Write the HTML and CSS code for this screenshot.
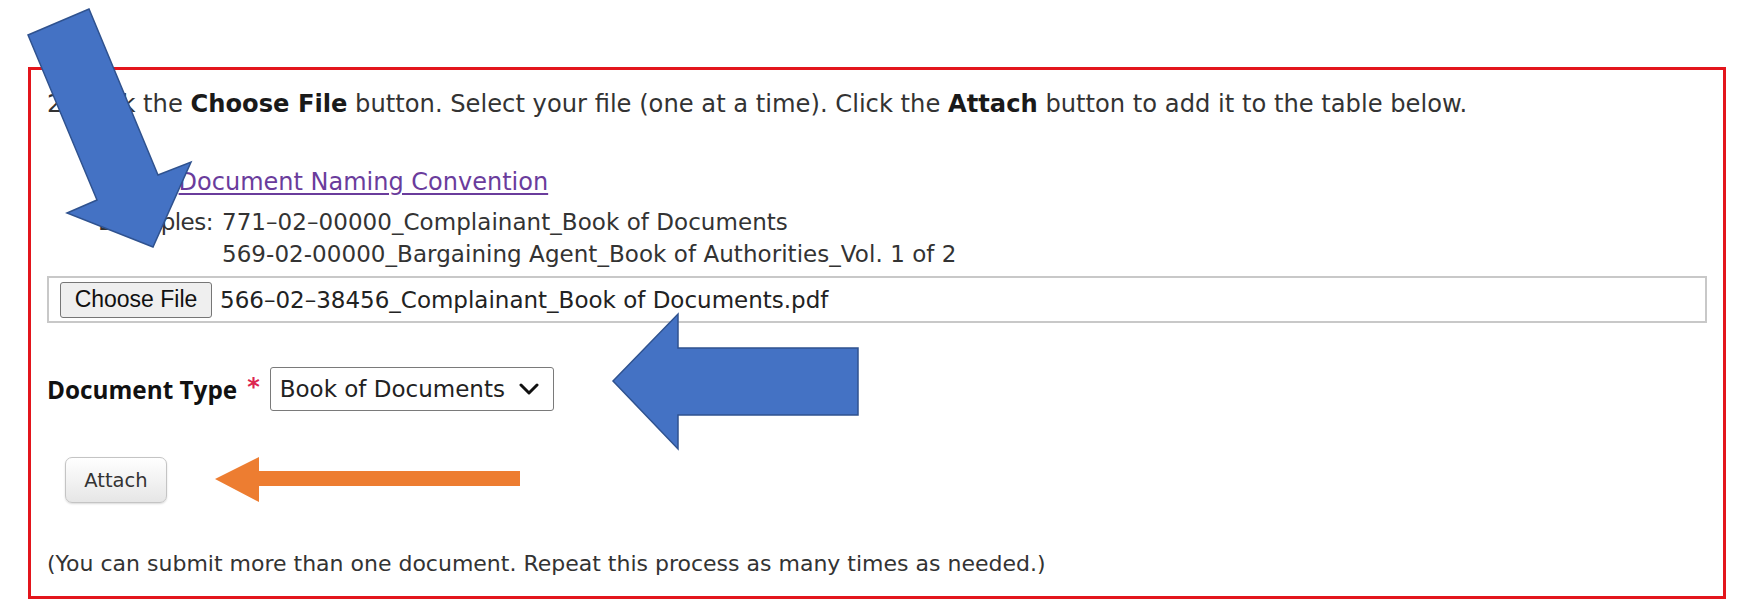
FILE: index.html
```html
<!DOCTYPE html>
<html lang="en">
<head>
<meta charset="utf-8">
<title>Attach documents</title>
<link rel="stylesheet" href="styles.css">
</head>
<body>
<div class="page">
  <section class="panel">
    <p class="step">2. Click the <b>Choose File</b> button. Select your file (one at a time). Click the <b>Attach</b> button to add it to the table below.</p>
    <p class="link-line">View <a href="#" class="doc-link">Document Naming Convention</a></p>
    <div class="examples">
      <span class="ex-label">Examples:</span>
      <span class="ex-value">771–02–00000_Complainant_Book of Documents</span>
      <span class="ex-value">569-02-00000_Bargaining Agent_Book of Authorities_Vol. 1 of 2</span>
    </div>
    <div class="filebox">
      <span class="file-btn">Choose File</span>
      <span class="file-name">566–02–38456_Complainant_Book of Documents.pdf</span>
    </div>
    <div class="doctype">
      <span class="doctype-label">Document Type</span>
      <span class="req">*</span>
      <span class="select">Book of Documents
        <svg class="chev" width="20" height="12" viewBox="0 0 20 12"><path d="M2 2 L10 10 L18 2" fill="none" stroke="#111" stroke-width="3" stroke-linecap="round" stroke-linejoin="round"/></svg>
      </span>
    </div>
    <div class="attach-row"><span class="attach-btn">Attach</span></div>
    <p class="note">(You can submit more than one document. Repeat this process as many times as needed.)</p>
  </section>
  <svg class="arrows" width="1751" height="614" viewBox="0 0 1751 614">
    <polygon points="28,35 89,9 158,175 191,162 153,247 67,213 97,200" fill="#4472C4" stroke="#2F528F" stroke-width="1.5"/>
    <polygon points="613,381 678,314 678,348 858,348 858,415 678,415 678,449" fill="#4472C4" stroke="#2F528F" stroke-width="1.5"/>
    <polygon points="215,479 259,457 259,471 520,471 520,486 259,486 259,502" fill="#ED7D31"/>
  </svg>
</div>
</body>
</html>
```
FILE: styles.css
```css
html, body {
  margin: 0;
  padding: 0;
  background: #ffffff;
}

.page {
  position: relative;
  width: 1751px;
  height: 614px;
  padding: 67px 0 0 28px;
  box-sizing: border-box;
  font-family: "DejaVu Sans", Verdana, sans-serif;
  font-size: 22px;
  color: #333333;
}

.panel {
  width: 1698px;
  box-sizing: border-box;
  border: 3px solid #e3151c;
  padding: 18px 16px 16px 16px;
}

.step {
  margin: 0;
  font-size: 24.2px;
  line-height: 32px;
  white-space: nowrap;
}

.step b {
  color: #1a1a1a;
}

.link-line {
  margin: 46px 0 0 67px;
  font-size: 24px;
  line-height: 32px;
  white-space: nowrap;
}

.doc-link {
  color: #6a3c9c;
  text-decoration: underline;
  text-underline-offset: 3px;
}

.examples {
  margin: 8px 0 0 47px;
  display: grid;
  grid-template-columns: 128px auto;
  font-size: 23px;
  line-height: 32px;
  white-space: nowrap;
}

.ex-label {
  grid-row: 1;
  justify-self: end;
  padding-right: 9px;
  letter-spacing: -0.5px;
}

.ex-value {
  grid-column: 2;
  letter-spacing: 0.05px;
}

.filebox {
  margin-top: 6px;
  height: 47px;
  box-sizing: border-box;
  border: 2px solid #c8c8c8;
  display: flex;
  align-items: center;
  padding-left: 11px;
  gap: 8px;
}

.file-btn {
  font-family: "Liberation Sans", Arial, sans-serif;
  font-size: 23px;
  color: #111;
  background: #efefef;
  border: 1.5px solid #767676;
  border-radius: 3px;
  height: 36px;
  width: 152px;
  box-sizing: border-box;
  display: flex;
  align-items: center;
  justify-content: center;
}

.file-name {
  font-size: 23px;
  color: #222;
}

.doctype {
  margin-top: 44px;
  height: 44px;
  display: flex;
  align-items: center;
}

.doctype-label {
  font-family: "Open Sans", sans-serif;
  font-weight: 700;
  font-size: 24.3px;
  color: #111;
}

.req {
  color: #dc2650;
  font-size: 24px;
  font-weight: 700;
  margin: 7px 10px 0 10px;
  align-self: flex-start;
  line-height: 26px;
}

.select {
  width: 284px;
  height: 44px;
  box-sizing: border-box;
  border: 1.5px solid #7a7a7a;
  border-radius: 3px;
  display: flex;
  align-items: center;
  justify-content: space-between;
  padding: 0 14px 0 9px;
  font-size: 23px;
  color: #222;
}

.chev {
  display: block;
}

.attach-row {
  margin-top: 46px;
  padding-left: 18px;
  display: flex;
}

.attach-btn {
  width: 102px;
  height: 46px;
  box-sizing: border-box;
  border: 1.5px solid #c4c4c4;
  border-radius: 7px;
  background: linear-gradient(#ffffff, #e6e6e6);
  box-shadow: 0 1px 2px rgba(0,0,0,0.15);
  display: flex;
  align-items: center;
  justify-content: center;
  font-size: 19.5px;
  color: #333;
}

.note {
  margin: 45px 0 0 0;
  line-height: 32px;
  white-space: nowrap;
}

.arrows {
  position: absolute;
  left: 0;
  top: 0;
  pointer-events: none;
}
```
